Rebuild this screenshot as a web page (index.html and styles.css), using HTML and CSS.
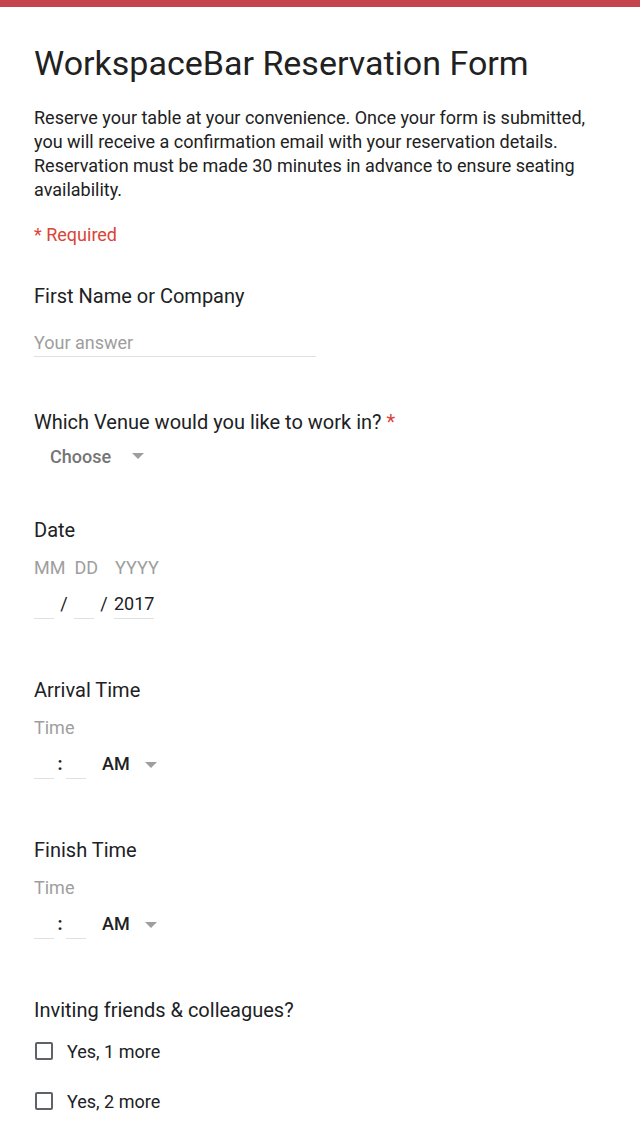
FILE: index.html
```html
<!DOCTYPE html>
<html lang="en">
<head>
  <meta charset="UTF-8" />
  <meta name="viewport" content="width=device-width, initial-scale=1.0"/>
  <title>WorkspaceBar Reservation Form</title>
  <link rel="stylesheet" href="styles.css">
</head>
<body>
  <div class="top-bar"></div>

  <div class="form">
    <h1 class="form-title">WorkspaceBar Reservation Form</h1>
    <p class="form-desc">Reserve your table at your convenience. Once your form is submitted, you will receive a confirmation email with your reservation details. Reservation must be made 30 minutes in advance to ensure seating availability.</p>
    <div class="required-note">* Required</div>

    <div class="question q-text">
      <div class="q-label">First Name or Company</div>
      <div class="text-input">Your answer</div>
    </div>

    <div class="question q-select">
      <div class="q-label">Which Venue would you like to work in? <span class="star">*</span></div>
      <div class="dropdown">
        <span class="dropdown-text">Choose</span>
        <span class="caret"></span>
      </div>
    </div>

    <div class="question q-date">
      <div class="q-label">Date</div>
      <div class="sub-labels">
        <span class="sub mm">MM</span>
        <span class="sub dd">DD</span>
        <span class="sub yyyy">YYYY</span>
      </div>
      <div class="field-row">
        <span class="field short"></span>
        <span class="sep slash">/</span>
        <span class="field short"></span>
        <span class="sep slash">/</span>
        <span class="field year">2017</span>
      </div>
    </div>

    <div class="question q-time">
      <div class="q-label">Arrival Time</div>
      <div class="sub-labels"><span class="sub">Time</span></div>
      <div class="field-row">
        <span class="field short"></span>
        <span class="sep colon">:</span>
        <span class="field short"></span>
        <span class="ampm">AM</span>
        <span class="caret"></span>
      </div>
    </div>

    <div class="question q-time">
      <div class="q-label">Finish Time</div>
      <div class="sub-labels"><span class="sub">Time</span></div>
      <div class="field-row">
        <span class="field short"></span>
        <span class="sep colon">:</span>
        <span class="field short"></span>
        <span class="ampm">AM</span>
        <span class="caret"></span>
      </div>
    </div>

    <div class="question q-check">
      <div class="q-label">Inviting friends &amp; colleagues?</div>
      <label class="check-row"><span class="box"></span>Yes, 1 more</label>
      <label class="check-row"><span class="box"></span>Yes, 2 more</label>
    </div>
  </div>
</body>
</html>
```

FILE: styles.css
```css
body {
  font-family: Roboto, "Noto Sans", Arial, sans-serif;
  margin: 0; padding: 0;
  background: #fff;
  color: #202124;
}
.top-bar {
  height: 7px;
  background: #c5454f;
}
.form {
  padding: 0 34px;
}
.form-title {
  margin: 36px 0 0;
  font-size: 34px;
  line-height: 40px;
  font-weight: 400;
  color: #212121;
}
.form-desc {
  margin: 23px 0 0;
  max-width: 558px;
  font-size: 18px;
  line-height: 24px;
  color: #212121;
}
.required-note {
  margin-top: 21px;
  font-size: 18px;
  line-height: 24px;
  color: #db4437;
}
.q-label {
  font-size: 20px;
  line-height: 24px;
  color: #202124;
}
.star {
  color: #db4437;
}
.q-text {
  margin-top: 37px;
}
.text-input {
  margin-top: 21px;
  width: 282px;
  height: 27px;
  border-bottom: 1px solid #e0e0e0;
  font-size: 18px;
  line-height: 28px;
  color: #9e9e9e;
}
.q-select {
  margin-top: 53px;
}
.dropdown {
  margin-top: 6px;
  height: 32px;
  display: flex;
  align-items: center;
  padding-left: 16px;
}
.dropdown-text {
  font-size: 18px;
  font-weight: 500;
  color: #757575;
}
.caret {
  width: 0; height: 0;
  border-left: 6px solid transparent;
  border-right: 6px solid transparent;
  border-top: 6px solid #9e9e9e;
  margin-left: 21px;
}
.q-date {
  margin-top: 46px;
}
.sub-labels {
  display: flex;
  font-size: 18px;
  line-height: 20px;
  color: #9e9e9e;
  margin-top: 16px;
}
.sub.dd { margin-left: 9px; }
.sub.yyyy { margin-left: 17px; }
.field-row {
  margin-top: 12px;
  display: flex;
  align-items: flex-end;
  height: 29px;
}
.field {
  display: block;
  height: 28px;
  border-bottom: 1px solid #e0e0e0;
  font-size: 18px;
  line-height: 28px;
  color: #202124;
}
.field.short { width: 20px; }
.field.year { width: 40px; }
.sep {
  font-size: 18px;
  line-height: 28px;
  align-self: flex-start;
  text-align: center;
}
.slash { width: 20px; }
.colon { width: 12px; font-weight: 700; }
.q-time {
  margin-top: 59px;
}
.ampm {
  margin-left: 16px;
  font-size: 18px;
  font-weight: 500;
  line-height: 28px;
  align-self: flex-start;
}
.q-time .caret {
  align-self: center;
  margin-left: 15px;
}
.q-check {
  margin-top: 59px;
}
.check-row {
  display: flex;
  align-items: center;
  height: 50px;
  font-size: 18px;
  color: #202124;
}
.q-check .q-label {
  margin-bottom: 4px;
}
.box {
  width: 14px; height: 14px;
  border: 2px solid #5f6368;
  border-radius: 2px;
  margin-left: 1px;
  margin-right: 14px;
}
```
